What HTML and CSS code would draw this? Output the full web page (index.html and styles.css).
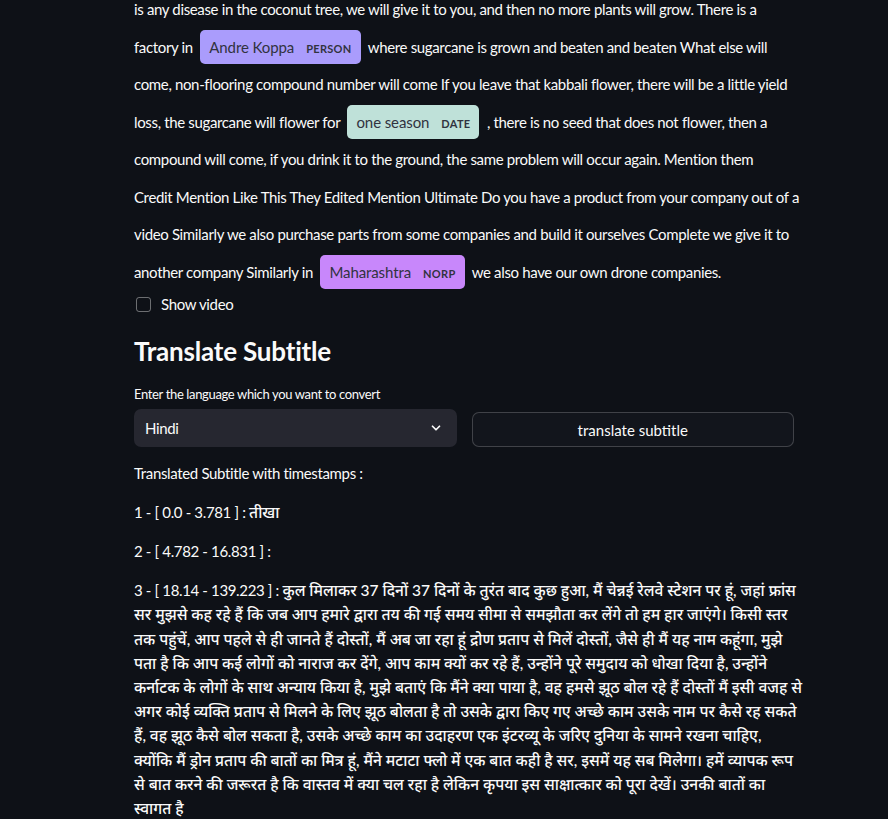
FILE: index.html
```html
<!DOCTYPE html>
<html>
<head>
<meta charset="utf-8">
<link rel="stylesheet" href="styles.css">
</head>
<body>
<main class="main">
  <div class="ents">is any disease in the coconut tree, we will give it to you, and then no more plants will grow. There is a<br>factory in <mark class="entity person">Andre Koppa<span class="label">PERSON</span></mark> where sugarcane is grown and beaten and beaten What else will<br>come, non-flooring compound number will come If you leave that kabbali flower, there will be a little yield<br>loss, the sugarcane will flower for <mark class="entity date">one season<span class="label">DATE</span></mark> , there is no seed that does not flower, then a<br>compound will come, if you drink it to the ground, the same problem will occur again. Mention them<br>Credit Mention Like This They Edited Mention Ultimate Do you have a product from your company out of a<br>video Similarly we also purchase parts from some companies and build it ourselves Complete we give it to<br>another company Similarly in <mark class="entity norp">Maharashtra<span class="label">NORP</span></mark> we also have our own drone companies.</div>

  <label class="checkbox"><span class="box"></span><span>Show video</span></label>

  <h3 class="heading">Translate Subtitle</h3>

  <div class="field-label">Enter the language which you want to convert</div>
  <div class="row">
    <div class="select">
      <span>Hindi</span>
      <svg class="chev" width="14" height="14" viewBox="0 0 24 24"><path d="M6 9l6 6 6-6" fill="none" stroke="#fafafa" stroke-width="3" stroke-linecap="round" stroke-linejoin="round"/></svg>
    </div>
    <div class="btn-wrap"><button class="btn">translate subtitle</button></div>
  </div>

  <p class="txt">Translated Subtitle with timestamps :</p>
  <p class="txt">1 - [ 0.0 - 3.781 ] : <span class="hi">तीखा</span></p>
  <p class="txt">2 - [ 4.782 - 16.831 ] :</p>
  <p class="txt long">3 - [ 18.14 - 139.223 ] : <span class="hi">कुल मिलाकर 37 दिनों 37 दिनों के तुरंत बाद कुछ हुआ, मैं चेन्नई रेलवे स्टेशन पर हूं, जहां फ्रांस<br>सर मुझसे कह रहे हैं कि जब आप हमारे द्वारा तय की गई समय सीमा से समझौता कर लेंगे तो हम हार जाएंगे। किसी स्तर<br>तक पहुंचें, आप पहले से ही जानते हैं दोस्तों, मैं अब जा रहा हूं द्रोण प्रताप से मिलें दोस्तों, जैसे ही मैं यह नाम कहूंगा, मुझे<br>पता है कि आप कई लोगों को नाराज कर देंगे, आप काम क्यों कर रहे हैं, उन्होंने पूरे समुदाय को धोखा दिया है, उन्होंने<br>कर्नाटक के लोगों के साथ अन्याय किया है, मुझे बताएं कि मैंने क्या पाया है, वह हमसे झूठ बोल रहे हैं दोस्तों मैं इसी वजह से<br>अगर कोई व्यक्ति प्रताप से मिलने के लिए झूठ बोलता है तो उसके द्वारा किए गए अच्छे काम उसके नाम पर कैसे रह सकते<br>हैं, वह झूठ कैसे बोल सकता है, उसके अच्छे काम का उदाहरण एक इंटरव्यू के जरिए दुनिया के सामने रखना चाहिए,<br>क्योंकि मैं ड्रोन प्रताप की बातों का मित्र हूं, मैंने मटाटा फ्लो में एक बात कही है सर, इसमें यह सब मिलेगा। हमें व्यापक रूप<br>से बात करने की जरूरत है कि वास्तव में क्या चल रहा है लेकिन कृपया इस साक्षात्कार को पूरा देखें। उनकी बातों का<br>स्वागत है</span></p>
</main>
</body>
</html>
```

FILE: styles.css
```css
html, body {
  margin: 0;
  padding: 0;
  background: #0e1117;
  color: #fafafa;
  font-family: "Lato", "Noto Sans Devanagari", "Lohit Devanagari", "Noto Sans", sans-serif;
  font-size: 15px;
  letter-spacing: -0.35px;
  overflow: hidden;
}

.main {
  width: 660px;
  margin: -9px 0 0 134px;
}

.ents {
  line-height: 2.5;
  white-space: nowrap;
}

.entity {
  padding: 8px 9px;
  margin: 0 4px;
  line-height: 1;
  border-radius: 5px;
  color: #31333f;
  font-size: 15px;
  letter-spacing: -0.1px;
}
.person { background: #aa9cfc; }
.date { background: #bfe1d9; }
.norp { background: #c887fb; }

.label {
  font-size: 11px;
  font-weight: 700;
  line-height: 1;
  vertical-align: middle;
  margin-left: 12px;
  letter-spacing: 0.3px;
}

.checkbox {
  display: flex;
  align-items: center;
  gap: 10px;
  margin-top: 1px;
  height: 24px;
}
.box {
  width: 13px;
  height: 13px;
  border: 1px solid rgba(250, 250, 250, 0.4);
  border-radius: 3px;
  margin-left: 2px;
}

.heading {
  font-size: 26px;
  font-weight: 700;
  margin: 20px 0 0;
  line-height: 1.2;
  letter-spacing: -0.2px;
}

.field-label {
  font-size: 13px;
  margin-top: 18px;
  line-height: 18px;
}

.row {
  display: grid;
  grid-template-columns: 1fr 1fr;
  gap: 15px;
  margin-top: 6px;
}
.select {
  height: 38px;
  background: #262730;
  border-radius: 7px;
  display: flex;
  align-items: center;
  justify-content: space-between;
  padding: 0 14px 0 11px;
  box-sizing: border-box;
}
.chev { display: block; }
.btn-wrap {
  display: flex;
  align-items: flex-end;
}
.btn {
  width: 100%;
  height: 35px;
  background: #12151c;
  border: 1px solid rgba(250, 250, 250, 0.2);
  border-radius: 7px;
  color: #fafafa;
  font: inherit;
  font-size: 15px;
  margin-bottom: 0;
}

.txt {
  margin: 0 0 15px;
  line-height: 24px;
}
.row + .txt { margin-top: 14px; }
.long {
  white-space: nowrap;
  line-height: 24.2px;
}

.hi {
  font-size: 15.5px;
  font-weight: 500;
  letter-spacing: 0;
}
```
